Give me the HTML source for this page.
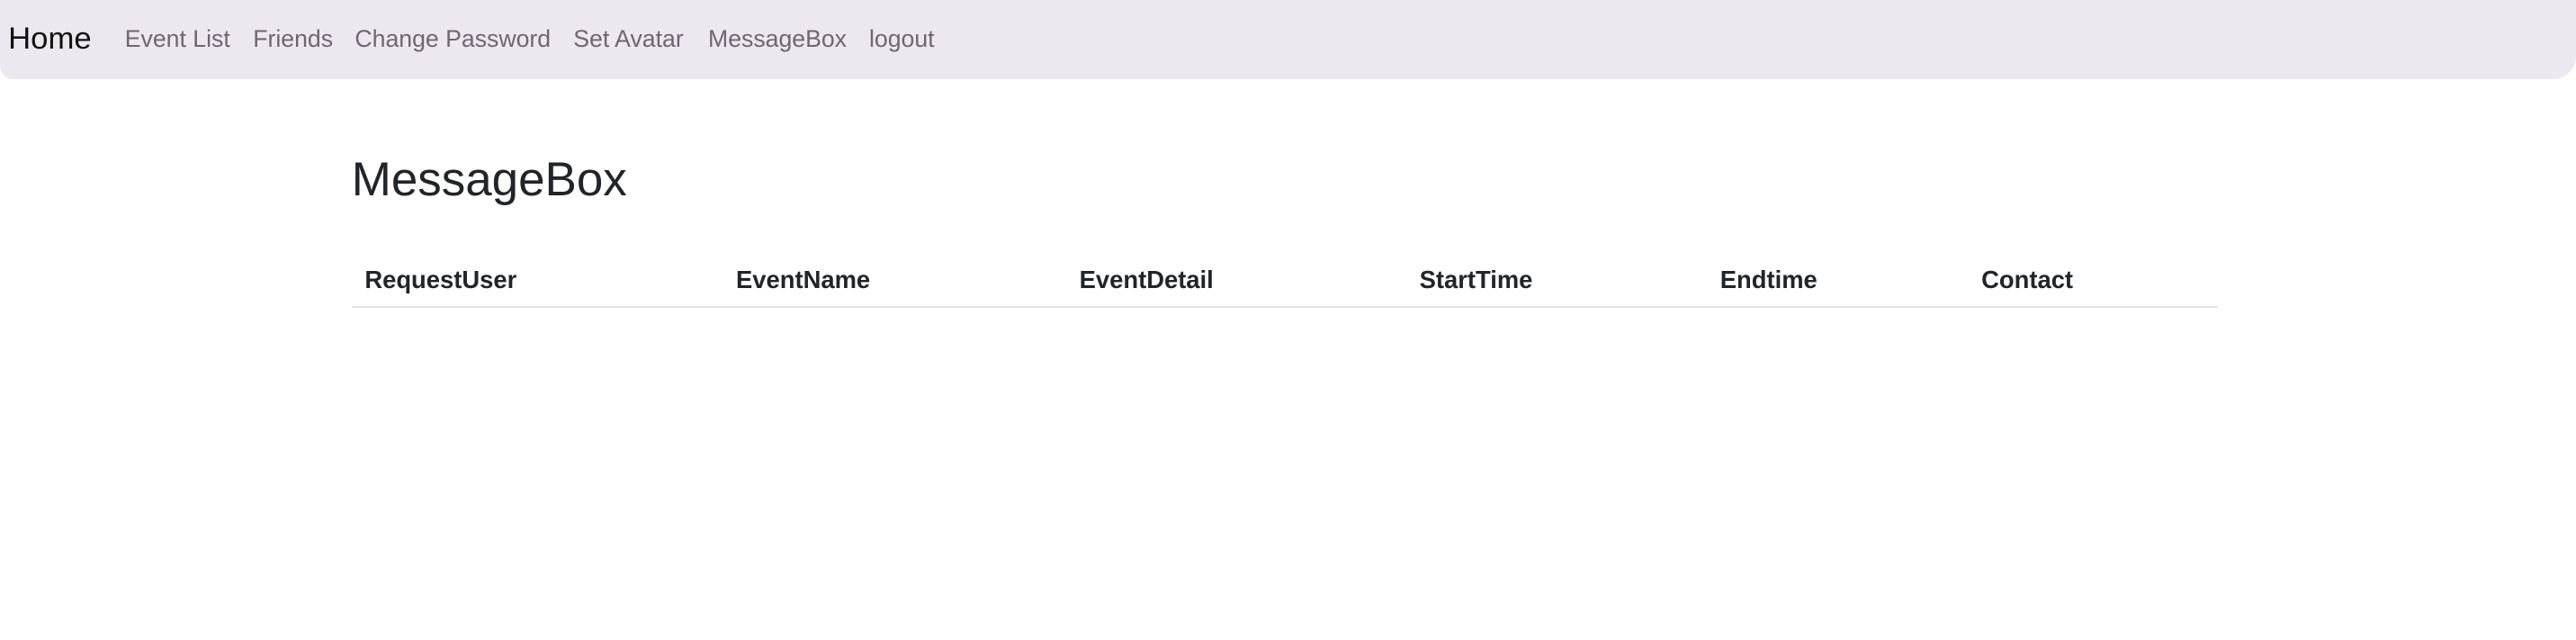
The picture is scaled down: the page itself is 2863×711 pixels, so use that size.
<!DOCTYPE html>
<html><head><meta charset="utf-8"><style>
html,body{margin:0;padding:0;background:#fff;}
body{zoom:1.826;width:1568px;height:389px;overflow:hidden;font-family:"Liberation Sans",sans-serif;color:#212529;}
.nav{position:absolute;left:0;top:0;width:1568px;height:48px;background:#ede8ef;border-radius:0 0 14px 8px;}
.nav span{position:absolute;top:0;line-height:48px;font-size:14.6px;color:#6f6670;white-space:nowrap;}
.nav .brand{font-size:19px;color:#111;left:5px;}
h2{position:absolute;left:214px;top:89px;margin:0;font-weight:400;font-size:29px;line-height:40px;color:#212529;}
.tbl{position:absolute;left:214px;top:156px;width:1136px;height:30px;border-bottom:1.5px solid #dee2e6;}
.tbl span{position:absolute;top:0;line-height:28px;font-weight:700;font-size:15px;color:#212529;white-space:nowrap;}
</style></head><body>
<div class="nav">
<span class="brand">Home</span>
<span style="left:76px">Event List</span>
<span style="left:154px">Friends</span>
<span style="left:216px">Change Password</span>
<span style="left:349px">Set Avatar</span>
<span style="left:431px">MessageBox</span>
<span style="left:529px">logout</span>
</div>
<h2>MessageBox</h2>
<div class="tbl">
<span style="left:8px">RequestUser</span>
<span style="left:234px">EventName</span>
<span style="left:443px">EventDetail</span>
<span style="left:650px">StartTime</span>
<span style="left:833px">Endtime</span>
<span style="left:992px">Contact</span>
</div>
</body></html>
